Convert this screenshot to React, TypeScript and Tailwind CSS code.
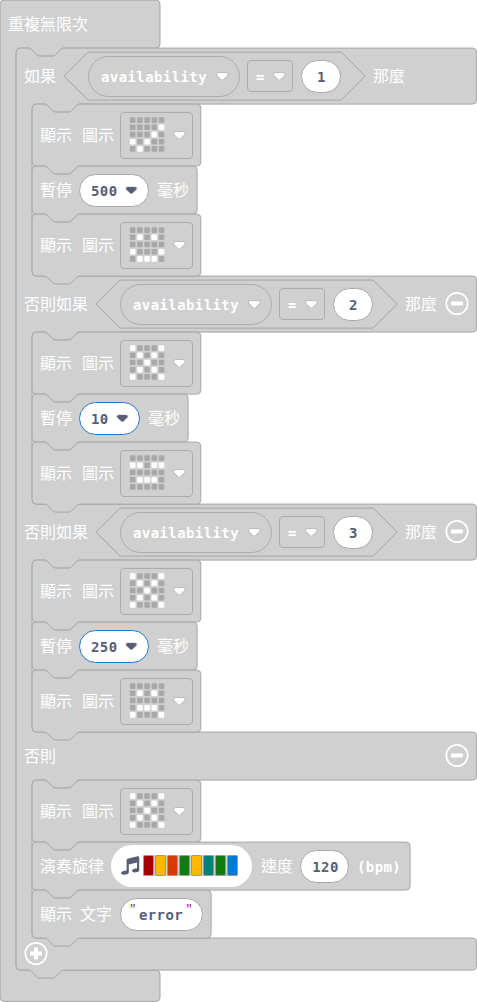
import React from "react";

const CJK =
  "relative -top-px font-['Noto_Sans_CJK_TC',sans-serif] text-[16px] leading-[24px] font-normal text-white whitespace-pre";
const MONO =
  "font-['DejaVu_Sans_Mono',monospace] text-[14px] leading-[20px] tracking-[0.4px] font-bold whitespace-pre";

const NOTCH = "c2,0 3,1 4,2 l4,4 c1,1 2,2 4,2 h12 c2,0 3,-1 4,-2 l4,-4 c1,-1 2,-2 4,-2";
const NOTCH_BACK = "c-2,0 -3,1 -4,2 l-4,4 c-1,1 -2,2 -4,2 h-12 c-2,0 -3,-1 -4,-2 l-4,-4 c-1,-1 -2,-2 -4,-2";

function Outline({ d, w, h }: { d: string; w: number; h: number }) {
  return (
    <svg
      className="pointer-events-none absolute top-0 left-0 overflow-visible"
      width={w}
      height={h}
      fill="#d0d0d0"
      stroke="#a6a6a6"
      strokeWidth="1"
      aria-hidden="true"
    >
      <path d={d} transform="translate(0.1 0.1)" />
    </svg>
  );
}

function statementPath(w: number, h: number) {
  return `M0,4 a4,4 0 0 1 4,-4 H12 ${NOTCH} H${w - 4} a4,4 0 0 1 4,4 V${h - 4} a4,4 0 0 1 -4,4 H48 ${NOTCH_BACK} H4 a4,4 0 0 1 -4,-4 z`;
}

function containerPath(w: number, h: number, mouths: number[][], topNotch: boolean) {
  let d = `M0,4 a4,4 0 0 1 4,-4 ${topNotch ? `H12 ${NOTCH}` : ""} H${w - 4} a4,4 0 0 1 4,4 `;
  for (const [from, to] of mouths) {
    d += `V${from - 4} a4,4 0 0 1 -4,4 H64 ${NOTCH_BACK} H20 a4,4 0 0 0 -4,4 V${to - 4} a4,4 0 0 0 4,4 H${w - 4} a4,4 0 0 1 4,4 `;
  }
  d += `V${h - 4} a4,4 0 0 1 -4,4 ${topNotch ? `H48 ${NOTCH_BACK}` : ""} H4 a4,4 0 0 1 -4,-4 z`;
  return d;
}

function Arrow({ color = "#ffffff" }: { color?: string }) {
  return (
    <svg className="shrink-0" width="12.7" height="8.8" viewBox="0 0 12.71 8.79" aria-hidden="true">
      <path
        fill="#231f20"
        opacity=".1"
        d="M12.71 2.44A2.41 2.41 0 0 1 12 4.16L8.08 8.08a2.45 2.45 0 0 1-3.45 0L.72 4.16A2.42 2.42 0 0 1 0 2.44 2.48 2.48 0 0 1 .71.71C1 .47 1.43 0 6.36 0s5.39.46 5.64.71a2.44 2.44 0 0 1 .71 1.73z"
      />
      <path
        fill={color}
        d="M6.36 7.79a1.43 1.43 0 0 1-1-.42L1.42 3.45a1.44 1.44 0 0 1 0-2c.56-.56 9.31-.56 9.87 0a1.44 1.44 0 0 1 0 2L7.37 7.37a1.43 1.43 0 0 1-1.01.42z"
      />
    </svg>
  );
}

function CircleButton({ plus = false }: { plus?: boolean }) {
  return (
    <svg className="block shrink-0" width="24" height="24" viewBox="0 0 24 24" aria-hidden="true">
      <circle cx="12" cy="11.5" r="10.7" fill="none" stroke="#fff" strokeWidth="1.7" />
      <rect x="6" y="9.5" width="12" height="4" rx="1" fill="#fff" />
      {plus && <rect x="10" y="5.5" width="4" height="12" rx="1" fill="#fff" />}
    </svg>
  );
}

function Statement({ w, h, children }: { w: number; h: number; children: React.ReactNode }) {
  return (
    <div className="relative" style={{ width: w, height: h }}>
      <Outline w={w} h={h} d={statementPath(w, h)} />
      <div className="relative flex h-full items-center pl-2">{children}</div>
    </div>
  );
}

function ShowIcon({ leds }: { leds: string }) {
  return (
    <Statement w={168.7} h={62}>
      <span className={`${CJK} w-[33px]`}>顯示</span>
      <span className={`${CJK} ml-[9px] w-[31px]`}>圖示</span>
      <div className="ml-[7px] flex h-[47px] w-[73px] shrink-0 items-center rounded-[4px] border border-[#acacac] pl-[8px]">
        <svg width="36" height="36" viewBox="0 0 36 36" aria-hidden="true">
          {leds.split("").map((v, i) => (
            <rect
              key={i}
              x={0.9 + (i % 5) * 7.2}
              y={0.3 + Math.floor(i / 5) * 7.2}
              width="5.6"
              height="5.6"
              rx="0.8"
              fill={v === "1" ? "#ffffff" : "#a8a8a8"}
            />
          ))}
        </svg>
        <span className="ml-2 flex">
          <Arrow />
        </span>
      </div>
    </Statement>
  );
}

function Pause({ value, w, pill, active = false }: { value: string; w: number; pill: number; active?: boolean }) {
  return (
    <Statement w={w} h={48}>
      <span className={`${CJK} w-[32px]`}>暫停</span>
      <div
        className={`ml-[7px] flex h-[33px] shrink-0 items-center justify-between rounded-full border bg-white pr-[10px] pl-[11px] ${active ? "border-[#2377c9]" : "border-[#a8a8a8]"}`}
        style={{ width: pill }}
      >
        <span className={`${MONO} relative top-px text-[#575e75]`}>{value}</span>
        <Arrow color="#575e75" />
      </div>
      <span className={`${CJK} ml-2`}>毫秒</span>
    </Statement>
  );
}

function NumberPill({ value, size }: { value: string; size: string }) {
  return (
    <div className={`flex h-[33px] shrink-0 items-center justify-center rounded-full border border-[#a8a8a8] bg-white ${size}`}>
      <span className={`${MONO} relative top-px left-px text-[#575e75]`}>{value}</span>
    </div>
  );
}

function Condition({ label, value, removable = false }: { label: string; value: string; removable?: boolean }) {
  return (
    <div className="relative flex h-[56px] items-center pl-2">
      <span className={CJK}>{label}</span>
      <div className="relative ml-2 flex h-[48px] w-[301px] shrink-0 items-center pl-6">
        <Outline w={301} h={48} d="M0,24 L24,0 H277 L301,24 L277,48 H24 z" />
        <div className="relative flex h-[41px] w-[152px] items-center justify-between rounded-full border border-[#acacac] pr-[10px] pl-[12px]">
          <span className={`${MONO} relative top-px text-white`}>availability</span>
          <Arrow />
        </div>
        <div className="relative ml-[7px] flex h-[32px] w-[46px] items-center justify-between rounded-[4px] border border-[#acacac] pr-[6px] pl-[8px]">
          <span className={`${MONO} relative top-px text-white`}>=</span>
          <Arrow />
        </div>
        <div className="relative ml-[7.5px]">
          <NumberPill value={value} size="w-[40px]" />
        </div>
      </div>
      <span className={`${CJK} ml-2`}>那麼</span>
      {removable && (
        <span className="ml-2 flex">
          <CircleButton />
        </span>
      )}
    </div>
  );
}

const CROSS = "1000101010001000101010001";
const NOTES = [
  "bg-[#a80000]",
  "bg-[#ffb900]",
  "bg-[#d83b01]",
  "bg-[#107c10]",
  "bg-[#ffb900]",
  "bg-[#008272]",
  "bg-[#107c10]",
  "bg-[#0078d7]",
];

function Melody() {
  return (
    <Statement w={378} h={48}>
      <span className={CJK}>演奏旋律</span>
      <div className="ml-[7px] flex h-[42px] w-[141px] shrink-0 items-center rounded-full bg-white pl-[9px]">
        <svg width="20" height="20" viewBox="0 0 20 20" fill="#575e75" aria-hidden="true">
          <path d="M6.6 3.8 Q6.6 3 7.4 2.7 L17.6 0.3 Q19.2 0 19.2 1.4 V15 H17 V6.4 L8.8 8.4 V16.2 H6.6 z" />
          <ellipse cx="4.9" cy="16.6" rx="3.9" ry="2" transform="rotate(-10 4.9 16.6)" />
          <ellipse cx="15.6" cy="14.4" rx="3.6" ry="2" transform="rotate(-10 15.6 14.4)" />
        </svg>
        <div className="-mt-px ml-[3px] flex gap-px bg-[#d0d0d0]">
          {NOTES.map((c, i) => (
            <span key={i} className={`h-[21px] w-[11px] rounded-[2px] border border-[#999999] ${c}`} />
          ))}
        </div>
      </div>
      <span className={`${CJK} mr-[7px] ml-[9px]`}>速度</span>
      <NumberPill value="120" size="w-[49px]" />
      <span className={`${MONO} relative top-px ml-[8px] text-white`}>(bpm)</span>
    </Statement>
  );
}

function Quote() {
  return (
    <span className="w-[8px] -translate-y-[5px] text-center font-['Liberation_Mono',monospace] text-[11px] leading-[20px] text-[#a31515]">
      "
    </span>
  );
}

function ShowText() {
  return (
    <Statement w={179} h={48}>
      <span className={`${CJK} w-[32px]`}>顯示</span>
      <span className={`${CJK} ml-2 w-[32px]`}>文字</span>
      <div className="ml-[7.5px] flex h-[33px] w-[83px] shrink-0 items-center justify-center rounded-full border border-[#a8a8a8] bg-white">
        <Quote />
        <span className={`${MONO} relative top-px mx-[2px] text-[#575e75]`}>error</span>
        <Quote />
      </div>
    </Statement>
  );
}

export default function App() {
  return (
    <div className="h-[1002px] w-[477px] overflow-hidden bg-white">
      <div className="relative h-[1001.5px] w-[160px]">
        <Outline w={160} h={1001} d={containerPath(159.9, 1001.3, [[48, 970]], false)} />
        <div className="relative flex h-[48px] items-center pl-2">
          <span className={CJK}>重複無限次</span>
        </div>
        <div className="relative ml-4 w-[461px]">
          <Outline
            w={461}
            h={922}
            d={containerPath(460.5, 922, [[56, 228], [284, 456], [512, 684], [732, 890]], true)}
          />
          <Condition label="如果" value="1" />
          <div className="relative ml-4">
            <ShowIcon leds="0000000001000101010001000" />
            <Pause value="500" w={165} pill={70} />
            <ShowIcon leds="0000001010000001000101110" />
          </div>
          <Condition label="否則如果" value="2" removable />
          <div className="relative ml-4">
            <ShowIcon leds={CROSS} />
            <Pause value="10" w={156} pill={61} active />
            <ShowIcon leds="0000011011000000111000000" />
          </div>
          <Condition label="否則如果" value="3" removable />
          <div className="relative ml-4">
            <ShowIcon leds={CROSS} />
            <Pause value="250" w={165} pill={70} active />
            <ShowIcon leds="0000001010000000111010001" />
          </div>
          <div className="relative flex h-[48px] items-center justify-between pr-2 pl-2">
            <span className={CJK}>否則</span>
            <CircleButton />
          </div>
          <div className="relative ml-4">
            <ShowIcon leds={CROSS} />
            <Melody />
            <ShowText />
          </div>
          <div className="relative flex h-[32px] items-center pl-2">
            <CircleButton plus />
          </div>
        </div>
      </div>
    </div>
  );
}
